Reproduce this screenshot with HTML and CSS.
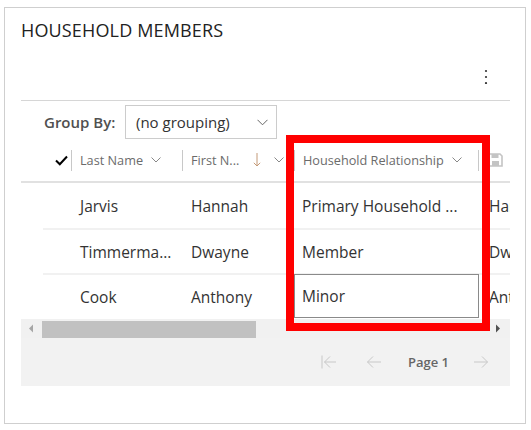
FILE: index.html
```html
<!DOCTYPE html>
<html>
<head>
<meta charset="utf-8">
<link rel="stylesheet" href="styles.css">
</head>
<body>
<div class="page">
  <div class="card">
    <h2 class="title">HOUSEHOLD MEMBERS</h2>
    <div class="cmdbar">
      <svg class="more" width="4" height="15" viewBox="0 0 4 15"><circle cx="2" cy="2" r="1.1" fill="#333"/><circle cx="2" cy="8" r="1.1" fill="#333"/><circle cx="2" cy="14" r="1.1" fill="#333"/></svg>
    </div>
    <div class="grid">
      <div class="groupby">
        <span class="gb-label">Group By:</span>
        <div class="select">
          <span>(no grouping)</span>
          <svg width="11" height="7" viewBox="0 0 11 7"><path d="M0.5 0.8 L5.5 5.8 L10.5 0.8" fill="none" stroke="#666" stroke-width="1"/></svg>
        </div>
      </div>
      <div class="table">
        <div class="thead">
          <div class="th-check"><svg width="13" height="11" viewBox="0 0 13 11"><path d="M1 5.5 L4.8 9.3 L12 1.5" fill="none" stroke="#000" stroke-width="2"/></svg></div>
          <div class="th c-last"><span>Last Name</span><svg class="chev" width="10" height="6" viewBox="0 0 10 6"><path d="M0.5 0.5 L5 5 L9.5 0.5" fill="none" stroke="#888" stroke-width="1"/></svg></div>
          <div class="th c-first"><span>First N...</span><svg class="sort" width="8" height="14" viewBox="0 0 8 14"><path d="M4 0 V13 M0.8 9.8 L4 13 L7.2 9.8" fill="none" stroke="#c49a78" stroke-width="1"/></svg><svg class="chev2" width="10" height="6" viewBox="0 0 10 6"><path d="M0.5 0.5 L5 5 L9.5 0.5" fill="none" stroke="#888" stroke-width="1"/></svg></div>
          <div class="th c-rel"><span>Household Relationship</span><svg class="chev" width="10" height="6" viewBox="0 0 10 6"><path d="M0.5 0.5 L5 5 L9.5 0.5" fill="none" stroke="#888" stroke-width="1"/></svg></div>
          <div class="th c-next"><svg width="15" height="14" viewBox="0 0 15 14"><path d="M1 1 H12 L14 3 V13 H1 Z" fill="none" stroke="#c4c4c4" stroke-width="1.6"/><rect x="3.5" y="1" width="7" height="4" fill="#c4c4c4"/><rect x="4" y="8" width="7" height="5" fill="#c4c4c4"/></svg></div>
        </div>
        <div class="row">
          <div class="td-check"></div>
          <div class="td c-last">Jarvis</div>
          <div class="td c-first">Hannah</div>
          <div class="td c-rel">Primary Household ...</div>
          <div class="td c-next">Hannah</div>
        </div>
        <div class="row">
          <div class="td-check"></div>
          <div class="td c-last">Timmerma...</div>
          <div class="td c-first">Dwayne</div>
          <div class="td c-rel">Member</div>
          <div class="td c-next">Dwayne</div>
        </div>
        <div class="row last">
          <div class="td-check"></div>
          <div class="td c-last">Cook</div>
          <div class="td c-first">Anthony</div>
          <div class="td c-rel focused">Minor</div>
          <div class="td c-next">Anthony</div>
        </div>
      </div>
      <div class="hscroll">
        <svg class="arr-l" width="6" height="9" viewBox="0 0 6 9"><path d="M5 0.5 V8.5 L1 4.5 Z" fill="#a6a6a6"/></svg>
        <div class="thumb"></div>
        <svg class="arr-r" width="6" height="9" viewBox="0 0 6 9"><path d="M1 0.5 V8.5 L5 4.5 Z" fill="#505050"/></svg>
      </div>
      <div class="pager">
        <svg class="pg-first" width="16" height="14" viewBox="0 0 16 14"><path d="M1 0.5 V13.5 M15 7 H3.5 M9 1.5 L3.5 7 L9 12.5" fill="none" stroke="#c8c8c8" stroke-width="1"/></svg>
        <svg class="pg-prev" width="15" height="14" viewBox="0 0 15 14"><path d="M15 7 H1.5 M7 1.5 L1.5 7 L7 12.5" fill="none" stroke="#c8c8c8" stroke-width="1"/></svg>
        <span class="pg-label">Page 1</span>
        <svg class="pg-next" width="15" height="14" viewBox="0 0 15 14"><path d="M0 7 H13.5 M8 1.5 L13.5 7 L8 12.5" fill="none" stroke="#c8c8c8" stroke-width="1"/></svg>
      </div>
    </div>
  </div>
  <div class="highlight"></div>
</div>
</body>
</html>
```
FILE: styles.css
```css
html, body {
  margin: 0;
  padding: 0;
  background: #fff;
}
body {
  font-family: "Open Sans", "Noto Sans", sans-serif;
  color: #333;
}
.page {
  position: relative;
  width: 531px;
  height: 430px;
  padding: 7px 0 0 4px;
  box-sizing: border-box;
}
.card {
  width: 522px;
  height: 417px;
  border: 1px solid #cfcfcf;
  box-sizing: border-box;
  padding: 0 15px 0 16px;
}
.title {
  margin: 0;
  padding-top: 10px;
  font-size: 18px;
  font-weight: 400;
  line-height: 25px;
  color: #222;
  letter-spacing: 0.15px;
}
.cmdbar {
  height: 57px;
  border-bottom: 1px solid #d6d6d6;
  display: flex;
  justify-content: flex-end;
  align-items: flex-start;
}
.more {
  margin-top: 26px;
  margin-right: 22px;
}
.grid {
  width: 489px;
}
.groupby {
  display: flex;
  align-items: center;
  margin-top: 4px;
  padding-left: 23px;
  height: 34px;
}
.gb-label {
  font-size: 15px;
  font-weight: 600;
  color: #505050;
  width: 81px;
}
.select {
  width: 152px;
  height: 34px;
  border: 1px solid #cccccc;
  box-sizing: border-box;
  display: flex;
  align-items: center;
  justify-content: space-between;
  padding: 0 8px 0 10px;
  font-size: 15px;
  color: #333;
}
.table {
  width: 489px;
  overflow: hidden;
}
.thead {
  display: flex;
  align-items: center;
  height: 42px;
  border-bottom: 2px solid #e1e1e1;
  padding-left: 22px;
  font-size: 12.7px;
  color: #6b6b6b;
  white-space: nowrap;
}
.th-check {
  width: 28px;
  flex: none;
  display: flex;
  align-items: center;
  padding-left: 12px;
  box-sizing: border-box;
}
.th {
  flex: none;
  height: 21px;
  border-left: 1px solid #c8c8c8;
  display: flex;
  align-items: center;
  box-sizing: border-box;
  padding-left: 8px;
}
.th .chev {
  margin-left: 8px;
}
.th .sort {
  margin-left: 14px;
}
.th .chev2 {
  margin-left: 13px;
}
.c-last { width: 111px; }
.c-first { width: 112px; }
.c-rel { width: 184px; }
.c-next { width: 60px; }
.th.c-next {
  padding-left: 9px;
}
.row {
  display: flex;
  height: 45px;
  margin-left: 22px;
  box-sizing: border-box;
  font-size: 15.5px;
  color: #333;
  white-space: nowrap;
}
.row + .row {
  border-top: 2px solid #f1f1f1;
}
.row.last {
  height: 46px;
}
.td-check {
  width: 28px;
  flex: none;
}
.td {
  flex: none;
  display: flex;
  align-items: center;
  box-sizing: border-box;
  overflow: hidden;
}
.td.c-last { padding-left: 9px; }
.td.c-first { padding-left: 9px; }
.td.c-rel { padding-left: 8px; }
.td.c-next { padding-left: 11px; }
.td.focused {
  width: 185px;
  height: 44px;
  margin-top: -1px;
  border: 1px solid #8a8a8a;
  padding-left: 7px;
  margin-right: -1px;
}
.hscroll {
  display: flex;
  align-items: center;
  height: 19px;
  background: #f1f1f1;
  padding-left: 7px;
}
.arr-l {
  flex: none;
}
.thumb {
  width: 214px;
  height: 17px;
  margin-top: 2px;
  margin-left: 8px;
  background: #c1c1c1;
}
.arr-r {
  margin-left: auto;
  margin-right: 9px;
}
.pager {
  display: flex;
  align-items: center;
  justify-content: flex-end;
  height: 48px;
  background: #f2f2f2;
  padding-right: 21px;
}
.pg-prev {
  margin-left: 29px;
}
.pg-label {
  margin-left: 27px;
  font-size: 13px;
  font-weight: 600;
  color: #666;
}
.pg-next {
  margin-left: 25px;
}
.highlight {
  position: absolute;
  left: 286px;
  top: 135px;
  width: 204px;
  height: 196px;
  border: 8px solid #ff0000;
  box-sizing: border-box;
}
```
